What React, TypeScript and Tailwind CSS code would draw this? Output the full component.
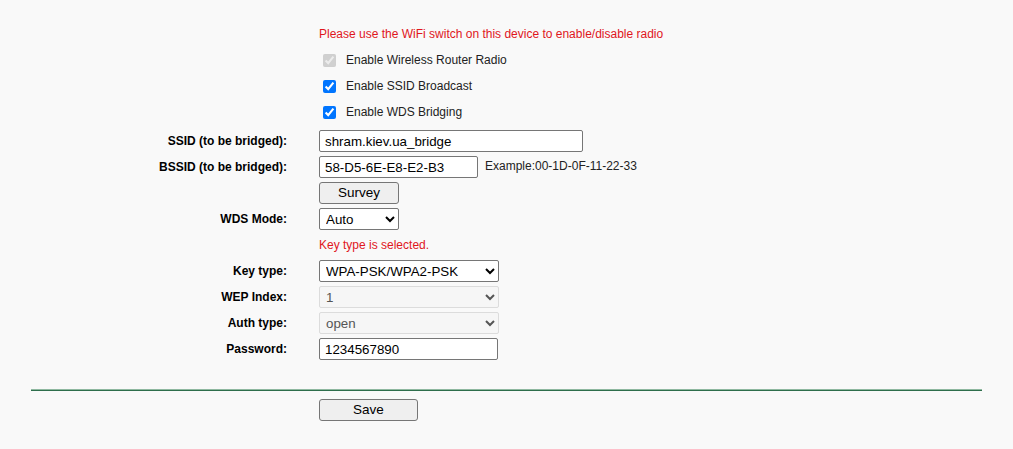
import React from "react";

const font = { fontFamily: '"Liberation Sans", Arial, sans-serif' };

function Row({ label, children }: { label?: string; children: React.ReactNode }) {
  return (
    <div className="flex h-[26px] items-center">
      <div className="w-[288px] shrink-0 pr-[1px] text-right text-[12px] font-bold text-black">{label}</div>
      <div className="ml-[31px] flex items-center">{children}</div>
    </div>
  );
}

function Check({ label, disabled }: { label: string; disabled?: boolean }) {
  return (
    <Row>
      <input
        type="checkbox"
        defaultChecked
        disabled={disabled}
        className="ml-[4px] h-[13px] w-[13px] accent-[#0075ff]"
      />
      <span className="ml-[10px] text-[12px] text-[#222]">{label}</span>
    </Row>
  );
}

const inputCls =
  "h-[22px] rounded-[2px] border border-[#767676] bg-white px-[5px] text-[13.33px] text-black outline-none";

export default function App() {
  return (
    <div className="min-h-[449px] w-full bg-[#f9f9f9] pt-[21px]" style={font}>
      <Row>
        <span className="text-[12px] text-[#e0161d]">
          Please use the WiFi switch on this device to enable/disable radio
        </span>
      </Row>
      <Check label="Enable Wireless Router Radio" disabled />
      <Check label="Enable SSID Broadcast" />
      <Check label="Enable WDS Bridging" />
      <div className="mt-[3px]">
        <Row label="SSID (to be bridged):">
          <input className={`${inputCls} w-[264px]`} defaultValue="shram.kiev.ua_bridge" />
        </Row>
        <Row label="BSSID (to be bridged):">
          <input className={`${inputCls} w-[159px]`} defaultValue="58-D5-6E-E8-E2-B3" />
          <span className="ml-[7px] -mt-[2px] text-[12px] text-[#222]">Example:00-1D-0F-11-22-33</span>
        </Row>
        <Row>
          <button className="h-[22px] w-[80px] rounded-[3px] border border-[#767676] bg-[#efefef] text-[13.5px] text-black">
            Survey
          </button>
        </Row>
        <Row label="WDS Mode:">
          <select className="h-[22px] w-[80px] rounded-[2px] border border-[#767676] bg-white pl-[2px] text-[13.33px] text-black" defaultValue="Auto">
            <option>Auto</option>
          </select>
        </Row>
        <Row>
          <span className="text-[12px] text-[#e0161d]">Key type is selected.</span>
        </Row>
        <Row label="Key type:">
          <select className="h-[22px] w-[180px] rounded-[2px] border border-[#767676] bg-white pl-[2px] text-[13.33px] text-black" defaultValue="WPA-PSK/WPA2-PSK">
            <option>WPA-PSK/WPA2-PSK</option>
          </select>
        </Row>
        <Row label="WEP Index:">
          <select disabled className="h-[22px] w-[180px] rounded-[2px] border border-[#dcdcdc] bg-[#f6f6f6] pl-[2px] text-[13.33px] text-[#555]" defaultValue="1">
            <option>1</option>
          </select>
        </Row>
        <Row label="Auth type:">
          <select disabled className="h-[22px] w-[180px] rounded-[2px] border border-[#dcdcdc] bg-[#f6f6f6] pl-[2px] text-[13.33px] text-[#555]" defaultValue="open">
            <option>open</option>
          </select>
        </Row>
        <Row label="Password:">
          <input className={`${inputCls} w-[179px]`} defaultValue="1234567890" />
        </Row>
      </div>
      <div className="ml-[31px] mt-[27px] w-[951px]">
        <div className="h-[1px] bg-[#8fb8a0]" />
        <div className="h-[1px] bg-[#2e6e4c]" />
      </div>
      <div className="ml-[319px] mt-[6px]">
        <button className="h-[22px] w-[99px] rounded-[3px] border border-[#767676] bg-[#efefef] text-[13.5px] text-black">
          Save
        </button>
      </div>
    </div>
  );
}
